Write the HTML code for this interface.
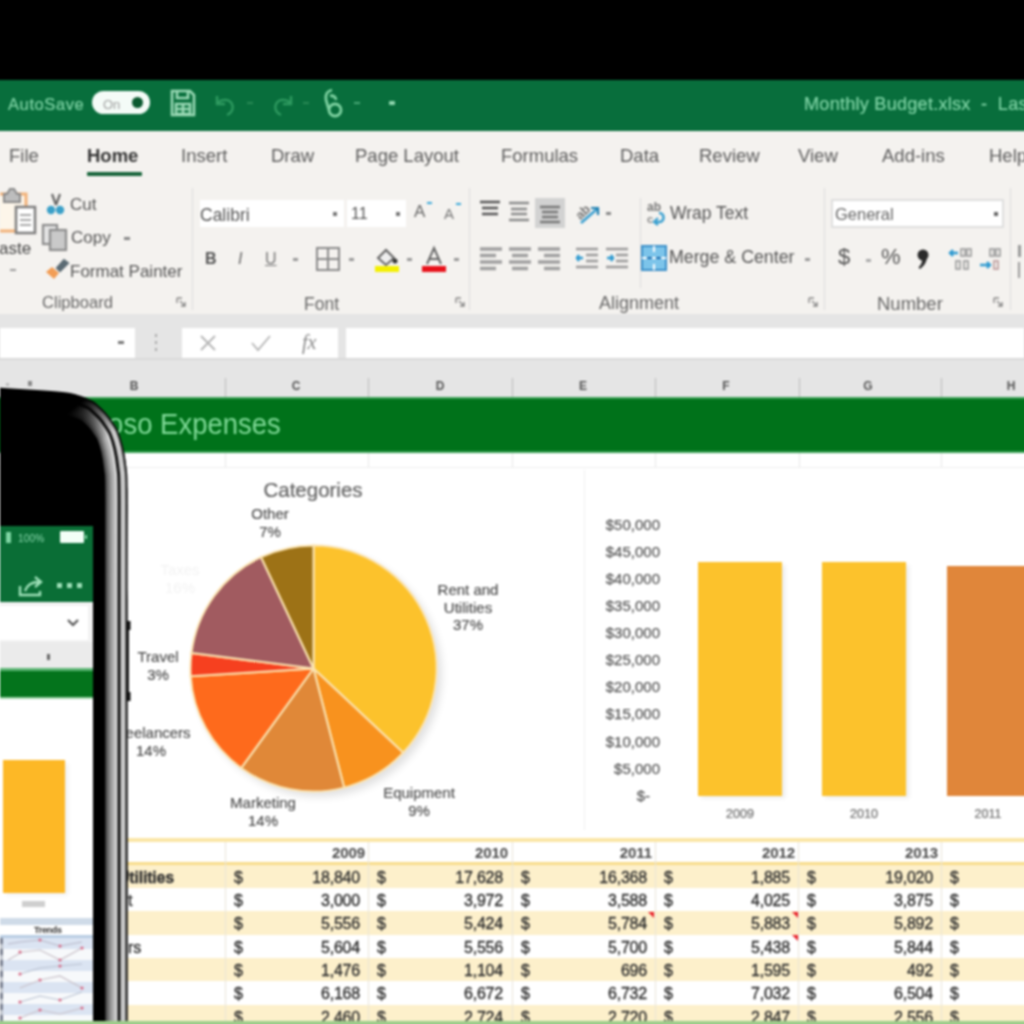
<!DOCTYPE html>
<html><head><meta charset="utf-8">
<style>
*{box-sizing:border-box}
html,body{margin:0;padding:0}
body{width:1024px;height:1024px;overflow:hidden;background:#000;position:relative;font-family:"Liberation Sans",sans-serif}
.a{position:absolute;white-space:nowrap}
#wrap{position:absolute;left:-12px;top:-12px;width:1048px;height:1048px;overflow:hidden;filter:blur(0.85px)}
#in{position:absolute;left:12px;top:12px;width:1024px;height:1024px}
#title{left:-12px;top:80px;width:1048px;height:51px;background:#086e3c}
#ribbon{left:-12px;top:131px;width:1048px;height:184px;background:#f4f2ef}
#fbar{left:-12px;top:314px;width:1048px;height:84px;background:#e5e5e5}
.tab{top:146px;font-size:18.5px;color:#5c5c5c;line-height:20px}
.grp{top:294px;font-size:14px;color:#666;line-height:18px}
.sep{width:1px;background:#dcdcdc;top:188px;height:122px}
.rt{font-size:14.5px;color:#444;line-height:18px}
#sheet{left:-12px;top:397px;width:1048px;height:660px;background:#fff}
#band{left:-12px;top:397px;width:1048px;height:56px;background:#00721a;border-top:2px solid #3aa055}
.colh{top:378px;font-size:12px;color:#555;line-height:16px;font-weight:bold;width:20px;text-align:center}
.vl{width:1px;background:#e8e8e8}
.ylab{font-size:15px;color:#5a5a5a;line-height:16px;text-align:right;width:70px;letter-spacing:0px;-webkit-text-stroke:0.25px #5a5a5a}
.plab{font-size:15px;color:#505050;line-height:17.5px;text-align:center;-webkit-text-stroke:0.2px #505050}
.row{left:0;width:1024px;height:24px}
.cell{font-size:16px;color:#2e2e2e;line-height:24px;letter-spacing:-0.2px;-webkit-text-stroke:0.35px #2e2e2e}
</style></head><body><div id="wrap"><div id="in">
<div class="a" id="title"></div>
<div class="a" id="ribbon"></div>
<div class="a tab" style="left:9px;">File</div>
<div class="a tab" style="left:87px;font-weight:bold;color:#333;">Home</div>
<div class="a tab" style="left:181px;">Insert</div>
<div class="a tab" style="left:271px;">Draw</div>
<div class="a tab" style="left:355px;">Page Layout</div>
<div class="a tab" style="left:501px;">Formulas</div>
<div class="a tab" style="left:620px;">Data</div>
<div class="a tab" style="left:699px;">Review</div>
<div class="a tab" style="left:798px;">View</div>
<div class="a tab" style="left:882px;">Add-ins</div>
<div class="a tab" style="left:989px;">Help</div>
<div class="a" style="left:87px;top:172px;width:55px;height:4px;background:#17643a;border-radius:1px"></div>

<!-- ribbon groups -->
<!-- Clipboard -->
<svg class="a" style="left:0;top:186px" width="40" height="50" viewBox="0 0 40 50">
<rect x="-4" y="8" width="30" height="37" fill="#fdf6ea" stroke="#f2b27a" stroke-width="3"/>
<path d="M4 16V8h3l3-5h4l3 5h3v8z" fill="#bdbdbd" stroke="#8a8a8a" stroke-width="2"/>
<rect x="16" y="21" width="19" height="26" fill="#fff" stroke="#7e7e7e" stroke-width="2.5"/>
<path d="M20 29h11M20 34h11M20 39h11" stroke="#a8a8a8" stroke-width="2"/></svg>
<div class="a rt" style="left:-1px;top:240px;font-size:17px">aste</div>
<div class="a" style="left:10px;top:269px;width:6px;height:2px;background:#999"></div>
<svg class="a" style="left:43px;top:192px" width="26" height="26" viewBox="0 0 26 26">
<path d="M9 2l4 11M17 2l-4 11" stroke="#666" stroke-width="2.2"/>
<circle cx="8" cy="18" r="4.2" fill="#3ba0c8"/><circle cx="17" cy="18" r="4.2" fill="#3ba0c8"/></svg>
<div class="a rt" style="left:70px;top:195.5px;font-size:17px;color:#555">Cut</div>
<svg class="a" style="left:41px;top:223px" width="30" height="30" viewBox="0 0 30 30">
<rect x="2" y="2" width="14" height="19" fill="#e4e4e4" stroke="#8d8d8d" stroke-width="2.2"/>
<rect x="9" y="7" width="16" height="20" fill="#c9c9c9" stroke="#8d8d8d" stroke-width="2.2"/></svg>
<div class="a rt" style="left:71px;top:229px;font-size:17px;color:#555">Copy</div>
<div class="a" style="left:124px;top:237px;width:6px;height:3px;background:#888"></div>
<svg class="a" style="left:43px;top:256px" width="28" height="26" viewBox="0 0 28 26">
<path d="M14 12l7-8 4 3-8 8z" fill="#5b6b74" stroke="#5b6b74" stroke-width="2"/>
<path d="M3 16l6-5 7 6-5 6z" fill="#f29d55"/></svg>
<div class="a rt" style="left:70px;top:262.5px;font-size:17px;color:#555">Format Painter</div>
<div class="a grp" style="left:42px;top:294px;font-size:16.6px">Clipboard</div>
<svg class="a" style="left:176px;top:297px" width="10" height="10" viewBox="0 0 10 10" fill="none" stroke="#888" stroke-width="1.4"><path d="M1 1h5M1 1v5M4 4l5 5M9 5v4H5"/></svg>
<div class="a sep" style="left:192px"></div>
<!-- Font -->
<div class="a" style="left:200px;top:200px;width:144px;height:27px;background:#fff"></div>
<div class="a rt" style="left:200px;top:206px;font-size:17.5px;color:#555">Calibri</div>
<div class="a" style="left:333px;top:212px;width:4px;height:4px;background:#777"></div>
<div class="a" style="left:347px;top:200px;width:59px;height:27px;background:#fff"></div>
<div class="a rt" style="left:351px;top:205px;font-size:16px;color:#555">11</div>
<div class="a" style="left:396px;top:212px;width:4px;height:4px;background:#777"></div>
<div class="a rt" style="left:414px;top:203px;font-size:17px;color:#666">A</div>
<div class="a" style="left:427px;top:202px;width:5px;height:3px;border-top:2px solid #3aa8d8"></div>
<div class="a rt" style="left:444px;top:205px;font-size:15px;color:#777">A</div>
<div class="a" style="left:456px;top:202px;width:5px;height:3px;border-bottom:2px solid #3aa8d8"></div>
<div class="a rt" style="left:205px;top:250px;font-size:16px;font-weight:bold;color:#555">B</div>
<div class="a rt" style="left:238px;top:250px;font-size:16px;font-style:italic;color:#666">I</div>
<div class="a rt" style="left:265px;top:250px;font-size:16px;text-decoration:underline;color:#777">U</div>
<div class="a" style="left:293px;top:258px;width:5px;height:3px;background:#999"></div>
<svg class="a" style="left:315px;top:246px" width="26" height="26" viewBox="0 0 26 26" fill="none" stroke="#8a8a8a" stroke-width="2"><rect x="2" y="2" width="22" height="22"/><path d="M13 2v22M2 13h22"/></svg>
<div class="a" style="left:349px;top:258px;width:5px;height:3px;background:#999"></div>
<svg class="a" style="left:373px;top:244px" width="28" height="30" viewBox="0 0 28 30"><path d="M5 14l8-8 8 8-8 7z" fill="#eee" stroke="#666" stroke-width="2"/><circle cx="22" cy="17" r="2.5" fill="#333"/><rect x="2" y="22" width="24" height="6" fill="#f4f000"/></svg>
<div class="a" style="left:407px;top:258px;width:5px;height:3px;background:#999"></div>
<svg class="a" style="left:420px;top:244px" width="28" height="30" viewBox="0 0 28 30"><path d="M7 20l7-16 7 16M9.5 15h9" fill="none" stroke="#666" stroke-width="2"/><rect x="2" y="22" width="24" height="6" fill="#e8111a"/></svg>
<div class="a" style="left:454px;top:258px;width:5px;height:3px;background:#999"></div>
<div class="a grp" style="left:304px;top:295px;font-size:17.5px">Font</div>
<svg class="a" style="left:455px;top:297px" width="10" height="10" viewBox="0 0 10 10" fill="none" stroke="#888" stroke-width="1.4"><path d="M1 1h5M1 1v5M4 4l5 5M9 5v4H5"/></svg>
<div class="a sep" style="left:469px"></div>
<!-- Alignment -->
<svg class="a" style="left:478px;top:199px" width="24" height="22" viewBox="0 0 24 22" stroke="#555" stroke-width="2.4"><path d="M2 3h20M4 9h16M4 15h16"/></svg>
<svg class="a" style="left:507px;top:199px" width="24" height="24" viewBox="0 0 24 24" stroke="#8a8a8a" stroke-width="2.4"><path d="M2 4h20M4 10h16M4 15h16M2 21h20"/></svg>
<div class="a" style="left:535px;top:198px;width:30px;height:30px;background:#d2d2d2"></div>
<svg class="a" style="left:538px;top:201px" width="24" height="24" viewBox="0 0 24 24" stroke="#777" stroke-width="2.4"><path d="M2 6h20M4 11h16M4 16h16M2 21h20"/></svg>
<svg class="a" style="left:572px;top:198px" width="30" height="28" viewBox="0 0 30 28" fill="none"><g transform="rotate(-45 12 12)"><text x="2" y="17" font-family="Liberation Sans" font-size="13" font-weight="bold" fill="#777">ab</text></g><path d="M9 25L25 11" stroke="#3b9fd0" stroke-width="2.6"/><path d="M19 10h7v7" stroke="#1f7fb0" stroke-width="2.2"/></svg>
<div class="a" style="left:606px;top:212px;width:5px;height:3px;background:#888"></div>
<svg class="a" style="left:645px;top:199px" width="26" height="28" viewBox="0 0 26 28" fill="none"><text x="2" y="12" font-family="Liberation Sans" font-size="12" font-weight="bold" fill="#777">ab</text><text x="2" y="24" font-family="Liberation Sans" font-size="11" font-weight="bold" fill="#888">c</text><path d="M14 14c6 0 6 9 0 9h-4" stroke="#3aa0d0" stroke-width="2.6"/><path d="M13 19l-4 4 4 3" stroke="#3aa0d0" stroke-width="2.2"/></svg>
<div class="a rt" style="left:670px;top:204px;font-size:17.5px;color:#555">Wrap Text</div>
<svg class="a" style="left:478px;top:246px" width="26" height="26" viewBox="0 0 26 26" stroke="#a0a0a0" stroke-width="3.4"><path d="M2 3h22M2 9.5h16M2 16h22M2 22.5h16"/></svg>
<svg class="a" style="left:507px;top:246px" width="26" height="26" viewBox="0 0 26 26" stroke="#a0a0a0" stroke-width="3.4"><path d="M2 3h22M5 9.5h16M2 16h22M5 22.5h16"/></svg>
<svg class="a" style="left:536px;top:246px" width="26" height="26" viewBox="0 0 26 26" stroke="#a0a0a0" stroke-width="3.4"><path d="M2 3h22M8 9.5h16M2 16h22M8 22.5h16"/></svg>
<svg class="a" style="left:574px;top:246px" width="26" height="24" viewBox="0 0 26 24" fill="none"><path d="M2 3h22M12 9h12M12 15h12M2 21h22" stroke="#9a9a9a" stroke-width="2.6"/><path d="M3 12h6M5 9l-2 3 2 3" stroke="#2f9ad0" stroke-width="2.4"/></svg>
<svg class="a" style="left:604px;top:246px" width="26" height="24" viewBox="0 0 26 24" fill="none"><path d="M2 3h22M12 9h12M12 15h12M2 21h22" stroke="#9a9a9a" stroke-width="2.6"/><path d="M3 12h6M7 9l2 3-2 3" stroke="#2f9ad0" stroke-width="2.4"/></svg>
<div class="a sep" style="left:640px;top:198px;height:90px"></div>
<svg class="a" style="left:641px;top:245px" width="26" height="26" viewBox="0 0 26 26"><rect x="1" y="1" width="24" height="24" fill="#7cc4ea" stroke="#3b8fc8" stroke-width="2"/><path d="M1 13h24M13 1v6M13 19v6" stroke="#fff" stroke-width="2"/><path d="M6 13h5M15 13h5" stroke="#1f6fb0" stroke-width="2"/></svg>
<div class="a rt" style="left:669px;top:247.5px;font-size:17.8px;color:#555">Merge &amp; Center</div>
<div class="a" style="left:805px;top:258px;width:5px;height:3px;background:#999"></div>
<div class="a grp" style="left:599px;top:294px;font-size:18px">Alignment</div>
<svg class="a" style="left:808px;top:297px" width="10" height="10" viewBox="0 0 10 10" fill="none" stroke="#888" stroke-width="1.4"><path d="M1 1h5M1 1v5M4 4l5 5M9 5v4H5"/></svg>
<div class="a sep" style="left:824px"></div>
<!-- Number -->
<div class="a" style="left:831px;top:199px;width:173px;height:29px;background:#fff;border:2px solid #dedede"></div>
<div class="a rt" style="left:835px;top:205px;font-size:16.5px;color:#666">General</div>
<div class="a" style="left:994px;top:212px;width:4px;height:4px;background:#666"></div>
<div class="a rt" style="left:838px;top:248px;font-size:22px;color:#555">$</div>
<div class="a" style="left:866px;top:259px;width:5px;height:3px;background:#aaa"></div>
<div class="a rt" style="left:881px;top:248px;font-size:22px;color:#555">%</div>
<svg class="a" style="left:915px;top:248px" width="16" height="24" viewBox="0 0 16 24"><circle cx="8" cy="7" r="5.5" fill="#2a2a2a"/><path d="M12 8c0 6-3 10-7 13l-1.5-1.5c3-3 4-6 3.5-9z" fill="#2a2a2a"/></svg>
<svg class="a" style="left:948px;top:246px" width="26" height="26" viewBox="0 0 26 26" fill="none"><path d="M2 7h8M5 4l-3 3 3 3" stroke="#2f9ad0" stroke-width="2.4"/><rect x="13" y="3" width="4" height="7" stroke="#999" stroke-width="1.6"/><rect x="19" y="3" width="4" height="7" stroke="#999" stroke-width="1.6"/><rect x="8" y="15" width="4" height="8" stroke="#999" stroke-width="1.6"/><rect x="16" y="15" width="4" height="8" stroke="#999" stroke-width="1.6"/></svg>
<svg class="a" style="left:978px;top:246px" width="26" height="26" viewBox="0 0 26 26" fill="none"><path d="M2 19h10M9 16l3 3-3 3" stroke="#2f9ad0" stroke-width="2.4"/><rect x="12" y="3" width="4" height="7" stroke="#999" stroke-width="1.6"/><rect x="18" y="3" width="4" height="7" stroke="#999" stroke-width="1.6"/><rect x="16" y="15" width="4" height="8" stroke="#b99" stroke-width="1.6"/></svg>
<div class="a grp" style="left:877px;top:295px;font-size:18.5px">Number</div>
<svg class="a" style="left:993px;top:297px" width="10" height="10" viewBox="0 0 10 10" fill="none" stroke="#888" stroke-width="1.4"><path d="M1 1h5M1 1v5M4 4l5 5M9 5v4H5"/></svg>
<div class="a sep" style="left:1010px"></div>
<div class="a" style="left:1018px;top:245px;width:3px;height:12px;background:#999"></div>
<div class="a" style="left:1018px;top:262px;width:6px;height:16px;border-left:2px solid #999"></div>
<!-- title bar content -->
<div class="a" style="left:8px;top:94px;font-size:16.5px;letter-spacing:0.6px;color:#80d4a6;line-height:20px;-webkit-text-stroke:0.2px #80d4a6">AutoSave</div>
<div class="a" style="left:92px;top:91px;width:58px;height:23px;border-radius:12px;background:#f4fbf7"></div>
<div class="a" style="left:103px;top:97px;font-size:13px;color:#a0a0a0;line-height:15px">On</div>
<div class="a" style="left:132px;top:97px;width:11px;height:11px;border-radius:6px;background:#0b5a30"></div>
<svg class="a" style="left:168px;top:88px" width="30" height="30" viewBox="0 0 30 30" fill="none" stroke="#9ad9b5" stroke-width="2.6">
<path d="M4 3h18l4 4v20H4z"/><path d="M9 3v7h11V3"/><rect x="8" y="16" width="14" height="10"/><path d="M15 16v10M8 21h14"/></svg>
<svg class="a" style="left:212px;top:92px" width="28" height="26" viewBox="0 0 28 26" fill="none" stroke="#2f9a60" stroke-width="2.4">
<path d="M5 4v8h8"/><path d="M5 12c3-5 12-6 15 0c2 4 0 9-5 11"/></svg>
<div class="a" style="left:247px;top:102px;width:6px;height:2px;background:#2a8a55"></div>
<svg class="a" style="left:268px;top:92px" width="28" height="26" viewBox="0 0 28 26" fill="none" stroke="#2f9a60" stroke-width="2.4">
<path d="M23 4v8h-8"/><path d="M23 12c-3-5-12-6-15 0c-2 4 0 9 5 11"/></svg>
<div class="a" style="left:303px;top:102px;width:6px;height:2px;background:#2a8a55"></div>
<svg class="a" style="left:320px;top:88px" width="28" height="32" viewBox="0 0 28 32" fill="none" stroke="#7fd3a2" stroke-width="2.8"><path d="M12 2c-5 1-7 5-6 10l3 10"/><path d="M10 8c3-1 6 1 6 4"/><circle cx="15" cy="22" r="6"/></svg>
<div class="a" style="left:354px;top:102px;width:6px;height:2px;background:#4aa876"></div>
<div class="a" style="left:389px;top:101px;width:6px;height:4px;background:#8fd6ae;border-radius:1px"></div>
<div class="a" style="left:804px;top:93px;font-size:18.2px;letter-spacing:0.2px;color:#80d4a6;line-height:22px;-webkit-text-stroke:0.2px #80d4a6">Monthly Budget.xlsx&nbsp; - &nbsp;Last</div>

<div class="a" id="fbar"></div>

<!-- formula bar -->
<div class="a" style="left:0;top:328px;width:135px;height:30px;background:#fff"></div>
<div class="a" style="left:118px;top:341px;width:6px;height:3px;background:#777"></div>
<div class="a" style="left:155px;top:334px;width:2px;height:3px;background:#aaa"></div>
<div class="a" style="left:155px;top:341px;width:2px;height:3px;background:#aaa"></div>
<div class="a" style="left:155px;top:348px;width:2px;height:3px;background:#aaa"></div>
<div class="a" style="left:182px;top:328px;width:156px;height:30px;background:#fff"></div>
<svg class="a" style="left:199px;top:335px" width="18" height="16" viewBox="0 0 18 16" stroke="#b5b5b5" stroke-width="1.8"><path d="M2 1l14 14M16 1L2 15"/></svg>
<svg class="a" style="left:250px;top:334px" width="22" height="18" viewBox="0 0 22 18" fill="none" stroke="#b5b5b5" stroke-width="1.8"><path d="M2 9l6 7L20 2"/></svg>
<div class="a" style="left:302px;top:330px;font-family:'Liberation Serif',serif;font-style:italic;font-size:20px;color:#888;line-height:24px">fx</div>
<div class="a" style="left:346px;top:328px;width:678px;height:30px;background:#fff"></div>
<!-- column headers -->
<div class="a" style="left:-12px;top:358px;width:1048px;height:2px;background:#d9d9d9"></div>
<div class="a" style="left:6px;top:383px;width:3px;height:3px;background:#bbb"></div><div class="a" style="left:28px;top:381px;width:4px;height:5px;background:#888"></div>
<div class="a colh" style="left:124px">B</div>
<div class="a colh" style="left:286px">C</div>
<div class="a colh" style="left:430px">D</div>
<div class="a colh" style="left:573px">E</div>
<div class="a colh" style="left:716px">F</div>
<div class="a colh" style="left:858px">G</div>
<div class="a colh" style="left:1001px">H</div>
<div class="a" style="left:225px;top:378px;width:1px;height:19px;background:#bbb"></div>
<div class="a" style="left:368px;top:378px;width:1px;height:19px;background:#bbb"></div>
<div class="a" style="left:512px;top:378px;width:1px;height:19px;background:#bbb"></div>
<div class="a" style="left:655px;top:378px;width:1px;height:19px;background:#bbb"></div>
<div class="a" style="left:799px;top:378px;width:1px;height:19px;background:#bbb"></div>
<div class="a" style="left:941px;top:378px;width:1px;height:19px;background:#bbb"></div>
<div class="a" id="sheet"></div>
<div class="a" id="band"></div>
<!-- sheet content -->
<div class="a" style="left:50px;top:405px;font-size:27.5px;color:#80da98;line-height:40px;transform:scaleY(1.08);transform-origin:0 30px">Contoso Expenses</div>
<div class="a" style="left:-12px;top:451px;width:1048px;height:2px;background:#3aa055"></div>
<div class="a vl" style="left:225px;top:453px;height:15px"></div>
<div class="a vl" style="left:368px;top:453px;height:15px"></div>
<div class="a vl" style="left:512px;top:453px;height:15px"></div>
<div class="a vl" style="left:655px;top:453px;height:15px"></div>
<div class="a vl" style="left:799px;top:453px;height:15px"></div>
<div class="a vl" style="left:941px;top:453px;height:15px"></div>
<div class="a" style="left:-12px;top:467px;width:1048px;height:1px;background:#eee"></div>
<svg class="a" style="left:0;top:0" width="1024" height="1024" viewBox="0 0 1024 1024">
<defs><filter id="sh" x="-20%" y="-20%" width="140%" height="140%"><feGaussianBlur stdDeviation="4"/></filter></defs>
<circle cx="318.5" cy="673.5" r="123" fill="#000" opacity="0.12" filter="url(#sh)"/>
<path d="M313.5 668.5L313.5 545.5A123 123 0 0 1 403.2 752.7Z" fill="#fcc22c" stroke="#fbe3b0" stroke-width="2"/><path d="M313.5 668.5L403.2 752.7A123 123 0 0 1 344.1 787.6Z" fill="#f8921e" stroke="#fbe3b0" stroke-width="2"/><path d="M313.5 668.5L344.1 787.6A123 123 0 0 1 241.2 768.0Z" fill="#e08838" stroke="#fbe3b0" stroke-width="2"/><path d="M313.5 668.5L241.2 768.0A123 123 0 0 1 190.7 676.2Z" fill="#fe6a1c" stroke="#fbe3b0" stroke-width="2"/><path d="M313.5 668.5L190.7 676.2A123 123 0 0 1 191.5 653.1Z" fill="#f6401f" stroke="#fbe3b0" stroke-width="2"/><path d="M313.5 668.5L191.5 653.1A123 123 0 0 1 261.1 557.2Z" fill="#a15b60" stroke="#fbe3b0" stroke-width="2"/><path d="M313.5 668.5L261.1 557.2A123 123 0 0 1 313.5 545.5Z" fill="#9d7216" stroke="#fbe3b0" stroke-width="2"/>
</svg>
<div class="a plab" style="left:213px;top:479px;font-size:20.5px;color:#666;width:200px;line-height:22px">Categories</div>
<div class="a plab" style="left:220px;top:505px;width:100px">Other<br>7%</div>
<div class="a plab" style="left:408px;top:581px;width:120px">Rent and<br>Utilities<br>37%</div>
<div class="a plab" style="left:108px;top:648px;width:100px">Travel<br>3%</div>
<div class="a plab" style="left:91px;top:724px;width:120px">Freelancers<br>14%</div>
<div class="a plab" style="left:213px;top:794px;width:100px">Marketing<br>14%</div>
<div class="a plab" style="left:369px;top:784px;width:100px">Equipment<br>9%</div>
<div class="a plab" style="left:130px;top:561px;width:100px;color:#f3f3f3;-webkit-text-stroke:0 transparent">Taxes<br>16%</div>
<div class="a" style="left:584px;top:470px;width:1px;height:360px;background:#f0f0f0"></div>
<!-- table -->
<div class="a" style="left:-12px;top:838px;width:1048px;height:4px;background:#fbe6a6"></div>
<div class="a" style="left:-12px;top:862px;width:1048px;height:3px;background:#f8dc8c"></div>
<div class="a" style="left:-12px;top:865px;width:1048px;height:23px;background:#fdf0cb"></div>
<div class="a" style="left:-12px;top:911px;width:1048px;height:24px;background:#fdf0cb"></div>
<div class="a" style="left:-12px;top:958px;width:1048px;height:23px;background:#fdf0cb"></div>
<div class="a" style="left:-12px;top:1005px;width:1048px;height:19px;background:#fdf0cb"></div>
<div class="a" style="left:225px;top:842px;width:1px;height:182px;background:#e9e4d8"></div>
<div class="a" style="left:368px;top:842px;width:1px;height:182px;background:#e9e4d8"></div>
<div class="a" style="left:512px;top:842px;width:1px;height:182px;background:#e9e4d8"></div>
<div class="a" style="left:655px;top:842px;width:1px;height:182px;background:#e9e4d8"></div>
<div class="a" style="left:798px;top:842px;width:1px;height:182px;background:#e9e4d8"></div>
<div class="a" style="left:941px;top:842px;width:1px;height:182px;background:#e9e4d8"></div>
<div class="a" style="left:265px;top:843px;width:100px;text-align:right;font-size:15px;font-weight:bold;color:#4a4a4a;line-height:19px;letter-spacing:-0.1px">2009</div>
<div class="a" style="left:408px;top:843px;width:100px;text-align:right;font-size:15px;font-weight:bold;color:#4a4a4a;line-height:19px;letter-spacing:-0.1px">2010</div>
<div class="a" style="left:552px;top:843px;width:100px;text-align:right;font-size:15px;font-weight:bold;color:#4a4a4a;line-height:19px;letter-spacing:-0.1px">2011</div>
<div class="a" style="left:695px;top:843px;width:100px;text-align:right;font-size:15px;font-weight:bold;color:#4a4a4a;line-height:19px;letter-spacing:-0.1px">2012</div>
<div class="a" style="left:838px;top:843px;width:100px;text-align:right;font-size:15px;font-weight:bold;color:#4a4a4a;line-height:19px;letter-spacing:-0.1px">2013</div>
<div class="a cell" style="left:118px;top:866px;font-weight:bold;">Utilities</div>
<div class="a cell" style="left:234px;top:866px">$</div>
<div class="a cell" style="left:260px;top:866px;width:100px;text-align:right">18,840</div>
<div class="a cell" style="left:377px;top:866px">$</div>
<div class="a cell" style="left:403px;top:866px;width:100px;text-align:right">17,628</div>
<div class="a cell" style="left:521px;top:866px">$</div>
<div class="a cell" style="left:547px;top:866px;width:100px;text-align:right">16,368</div>
<div class="a cell" style="left:664px;top:866px">$</div>
<div class="a cell" style="left:690px;top:866px;width:100px;text-align:right">1,885</div>
<div class="a cell" style="left:807px;top:866px">$</div>
<div class="a cell" style="left:833px;top:866px;width:100px;text-align:right">19,020</div>
<div class="a cell" style="left:950px;top:866px">$</div>
<div class="a cell" style="left:128px;top:889px;">t</div>
<div class="a cell" style="left:234px;top:889px">$</div>
<div class="a cell" style="left:260px;top:889px;width:100px;text-align:right">3,000</div>
<div class="a cell" style="left:377px;top:889px">$</div>
<div class="a cell" style="left:403px;top:889px;width:100px;text-align:right">3,972</div>
<div class="a cell" style="left:521px;top:889px">$</div>
<div class="a cell" style="left:547px;top:889px;width:100px;text-align:right">3,588</div>
<div class="a cell" style="left:664px;top:889px">$</div>
<div class="a cell" style="left:690px;top:889px;width:100px;text-align:right">4,025</div>
<div class="a cell" style="left:807px;top:889px">$</div>
<div class="a cell" style="left:833px;top:889px;width:100px;text-align:right">3,875</div>
<div class="a cell" style="left:950px;top:889px">$</div>
<div class="a cell" style="left:234px;top:912px">$</div>
<div class="a cell" style="left:260px;top:912px;width:100px;text-align:right">5,556</div>
<div class="a cell" style="left:377px;top:912px">$</div>
<div class="a cell" style="left:403px;top:912px;width:100px;text-align:right">5,424</div>
<div class="a cell" style="left:521px;top:912px">$</div>
<div class="a cell" style="left:547px;top:912px;width:100px;text-align:right">5,784</div>
<div class="a cell" style="left:664px;top:912px">$</div>
<div class="a cell" style="left:690px;top:912px;width:100px;text-align:right">5,883</div>
<div class="a cell" style="left:807px;top:912px">$</div>
<div class="a cell" style="left:833px;top:912px;width:100px;text-align:right">5,892</div>
<div class="a cell" style="left:950px;top:912px">$</div>
<div class="a cell" style="left:128px;top:936px;">rs</div>
<div class="a cell" style="left:234px;top:936px">$</div>
<div class="a cell" style="left:260px;top:936px;width:100px;text-align:right">5,604</div>
<div class="a cell" style="left:377px;top:936px">$</div>
<div class="a cell" style="left:403px;top:936px;width:100px;text-align:right">5,556</div>
<div class="a cell" style="left:521px;top:936px">$</div>
<div class="a cell" style="left:547px;top:936px;width:100px;text-align:right">5,700</div>
<div class="a cell" style="left:664px;top:936px">$</div>
<div class="a cell" style="left:690px;top:936px;width:100px;text-align:right">5,438</div>
<div class="a cell" style="left:807px;top:936px">$</div>
<div class="a cell" style="left:833px;top:936px;width:100px;text-align:right">5,844</div>
<div class="a cell" style="left:950px;top:936px">$</div>
<div class="a cell" style="left:234px;top:959px">$</div>
<div class="a cell" style="left:260px;top:959px;width:100px;text-align:right">1,476</div>
<div class="a cell" style="left:377px;top:959px">$</div>
<div class="a cell" style="left:403px;top:959px;width:100px;text-align:right">1,104</div>
<div class="a cell" style="left:521px;top:959px">$</div>
<div class="a cell" style="left:547px;top:959px;width:100px;text-align:right">696</div>
<div class="a cell" style="left:664px;top:959px">$</div>
<div class="a cell" style="left:690px;top:959px;width:100px;text-align:right">1,595</div>
<div class="a cell" style="left:807px;top:959px">$</div>
<div class="a cell" style="left:833px;top:959px;width:100px;text-align:right">492</div>
<div class="a cell" style="left:950px;top:959px">$</div>
<div class="a cell" style="left:234px;top:982px">$</div>
<div class="a cell" style="left:260px;top:982px;width:100px;text-align:right">6,168</div>
<div class="a cell" style="left:377px;top:982px">$</div>
<div class="a cell" style="left:403px;top:982px;width:100px;text-align:right">6,672</div>
<div class="a cell" style="left:521px;top:982px">$</div>
<div class="a cell" style="left:547px;top:982px;width:100px;text-align:right">6,732</div>
<div class="a cell" style="left:664px;top:982px">$</div>
<div class="a cell" style="left:690px;top:982px;width:100px;text-align:right">7,032</div>
<div class="a cell" style="left:807px;top:982px">$</div>
<div class="a cell" style="left:833px;top:982px;width:100px;text-align:right">6,504</div>
<div class="a cell" style="left:950px;top:982px">$</div>
<div class="a cell" style="left:234px;top:1006px">$</div>
<div class="a cell" style="left:260px;top:1006px;width:100px;text-align:right">2,460</div>
<div class="a cell" style="left:377px;top:1006px">$</div>
<div class="a cell" style="left:403px;top:1006px;width:100px;text-align:right">2,724</div>
<div class="a cell" style="left:521px;top:1006px">$</div>
<div class="a cell" style="left:547px;top:1006px;width:100px;text-align:right">2,720</div>
<div class="a cell" style="left:664px;top:1006px">$</div>
<div class="a cell" style="left:690px;top:1006px;width:100px;text-align:right">2,847</div>
<div class="a cell" style="left:807px;top:1006px">$</div>
<div class="a cell" style="left:833px;top:1006px;width:100px;text-align:right">2,556</div>
<div class="a cell" style="left:950px;top:1006px">$</div>
<svg class="a" style="left:648px;top:912px" width="6" height="6"><path d="M0 0h6v6z" fill="#e8202a"/></svg>
<svg class="a" style="left:792px;top:912px" width="6" height="6"><path d="M0 0h6v6z" fill="#e8202a"/></svg>
<svg class="a" style="left:792px;top:935px" width="6" height="6"><path d="M0 0h6v6z" fill="#e8202a"/></svg>

<div class="a ylab" style="left:590px;top:516.7px">$50,000</div>
<div class="a ylab" style="left:590px;top:543.8px">$45,000</div>
<div class="a ylab" style="left:590px;top:570.9px">$40,000</div>
<div class="a ylab" style="left:590px;top:598.0px">$35,000</div>
<div class="a ylab" style="left:590px;top:625.1px">$30,000</div>
<div class="a ylab" style="left:590px;top:652.2px">$25,000</div>
<div class="a ylab" style="left:590px;top:679.3px">$20,000</div>
<div class="a ylab" style="left:590px;top:706.4px">$15,000</div>
<div class="a ylab" style="left:590px;top:733.5px">$10,000</div>
<div class="a ylab" style="left:590px;top:760.6px">$5,000</div>
<div class="a ylab" style="left:590px;top:787.7px;padding-right:10px">$-</div>

<div class="a" style="left:701px;top:565px;width:84px;height:233px;background:#000;opacity:.08;filter:blur(2px)"></div>
<div class="a" style="left:825px;top:565px;width:84px;height:233px;background:#000;opacity:.08;filter:blur(2px)"></div>
<div class="a" style="left:698px;top:562px;width:84px;height:234px;background:#fcc22c"></div>
<div class="a" style="left:822px;top:562px;width:84px;height:234px;background:#fcc22c"></div>
<div class="a" style="left:947px;top:566px;width:84px;height:230px;background:#e0863a"></div>
<div class="a plab" style="left:700px;top:806px;width:80px;font-size:12.5px;color:#777">2009</div>
<div class="a plab" style="left:824px;top:806px;width:80px;font-size:12.5px;color:#777">2010</div>
<div class="a plab" style="left:948px;top:806px;width:80px;font-size:12.5px;color:#777">2011</div>


<!-- phone -->
<svg class="a" style="left:0;top:0" width="1024" height="1024" viewBox="0 0 1024 1024">
<defs>
<clipPath id="pb"><path d="M-40 385C-35.0 385.3 -26.7 385.9 -10.0 387.0C6.7 388.1 45.1 390.3 60.0 391.7C74.9 393.1 74.2 394.1 79.5 395.6C84.8 397.1 88.8 398.8 92.0 400.5C95.2 402.2 96.7 403.9 99.0 406.0C101.3 408.1 103.8 410.5 106.0 413.0C108.2 415.5 110.0 418.0 112.0 421.0C114.0 424.0 116.2 426.7 118.0 431.0C119.8 435.3 121.6 441.0 123.0 447.0C124.4 453.0 125.5 459.8 126.3 467.0C127.0 474.2 127.3 467.8 127.5 490.0C127.7 512.2 127.5 498.3 127.5 600.0C127.5 701.7 127.5 1016.7 127.5 1100.0L-40 1100Z"/></clipPath>
<linearGradient id="mg" gradientUnits="userSpaceOnUse" x1="86" y1="398" x2="114" y2="432"><stop offset="0" stop-color="#000"/><stop offset="1" stop-color="#fff"/></linearGradient>
<mask id="mk" maskUnits="userSpaceOnUse" x="0" y="0" width="1024" height="1024"><rect x="0" y="0" width="1024" height="1024" fill="url(#mg)"/></mask>
</defs>
<path d="M-40 385C-35.0 385.3 -26.7 385.9 -10.0 387.0C6.7 388.1 45.1 390.3 60.0 391.7C74.9 393.1 74.2 394.1 79.5 395.6C84.8 397.1 88.8 398.8 92.0 400.5C95.2 402.2 96.7 403.9 99.0 406.0C101.3 408.1 103.8 410.5 106.0 413.0C108.2 415.5 110.0 418.0 112.0 421.0C114.0 424.0 116.2 426.7 118.0 431.0C119.8 435.3 121.6 441.0 123.0 447.0C124.4 453.0 125.5 459.8 126.3 467.0C127.0 474.2 127.3 467.8 127.5 490.0C127.7 512.2 127.5 498.3 127.5 600.0C127.5 701.7 127.5 1016.7 127.5 1100.0L-40 1100Z" fill="#000"/>
<g clip-path="url(#pb)"><g mask="url(#mk)"><path d="M-40 385C-35.0 385.3 -26.7 385.9 -10.0 387.0C6.7 388.1 45.1 390.3 60.0 391.7C74.9 393.1 74.2 394.1 79.5 395.6C84.8 397.1 88.8 398.8 92.0 400.5C95.2 402.2 96.7 403.9 99.0 406.0C101.3 408.1 103.8 410.5 106.0 413.0C108.2 415.5 110.0 418.0 112.0 421.0C114.0 424.0 116.2 426.7 118.0 431.0C119.8 435.3 121.6 441.0 123.0 447.0C124.4 453.0 125.5 459.8 126.3 467.0C127.0 474.2 127.3 467.8 127.5 490.0C127.7 512.2 127.5 498.3 127.5 600.0C127.5 701.7 127.5 1016.7 127.5 1100.0" fill="none" stroke="#5a5a5a" stroke-width="44"/><path d="M-40 385C-35.0 385.3 -26.7 385.9 -10.0 387.0C6.7 388.1 45.1 390.3 60.0 391.7C74.9 393.1 74.2 394.1 79.5 395.6C84.8 397.1 88.8 398.8 92.0 400.5C95.2 402.2 96.7 403.9 99.0 406.0C101.3 408.1 103.8 410.5 106.0 413.0C108.2 415.5 110.0 418.0 112.0 421.0C114.0 424.0 116.2 426.7 118.0 431.0C119.8 435.3 121.6 441.0 123.0 447.0C124.4 453.0 125.5 459.8 126.3 467.0C127.0 474.2 127.3 467.8 127.5 490.0C127.7 512.2 127.5 498.3 127.5 600.0C127.5 701.7 127.5 1016.7 127.5 1100.0" fill="none" stroke="#8a8a8a" stroke-width="38"/><path d="M-40 385C-35.0 385.3 -26.7 385.9 -10.0 387.0C6.7 388.1 45.1 390.3 60.0 391.7C74.9 393.1 74.2 394.1 79.5 395.6C84.8 397.1 88.8 398.8 92.0 400.5C95.2 402.2 96.7 403.9 99.0 406.0C101.3 408.1 103.8 410.5 106.0 413.0C108.2 415.5 110.0 418.0 112.0 421.0C114.0 424.0 116.2 426.7 118.0 431.0C119.8 435.3 121.6 441.0 123.0 447.0C124.4 453.0 125.5 459.8 126.3 467.0C127.0 474.2 127.3 467.8 127.5 490.0C127.7 512.2 127.5 498.3 127.5 600.0C127.5 701.7 127.5 1016.7 127.5 1100.0" fill="none" stroke="#b0b0b0" stroke-width="32"/><path d="M-40 385C-35.0 385.3 -26.7 385.9 -10.0 387.0C6.7 388.1 45.1 390.3 60.0 391.7C74.9 393.1 74.2 394.1 79.5 395.6C84.8 397.1 88.8 398.8 92.0 400.5C95.2 402.2 96.7 403.9 99.0 406.0C101.3 408.1 103.8 410.5 106.0 413.0C108.2 415.5 110.0 418.0 112.0 421.0C114.0 424.0 116.2 426.7 118.0 431.0C119.8 435.3 121.6 441.0 123.0 447.0C124.4 453.0 125.5 459.8 126.3 467.0C127.0 474.2 127.3 467.8 127.5 490.0C127.7 512.2 127.5 498.3 127.5 600.0C127.5 701.7 127.5 1016.7 127.5 1100.0" fill="none" stroke="#cfcfcf" stroke-width="26"/><path d="M-40 385C-35.0 385.3 -26.7 385.9 -10.0 387.0C6.7 388.1 45.1 390.3 60.0 391.7C74.9 393.1 74.2 394.1 79.5 395.6C84.8 397.1 88.8 398.8 92.0 400.5C95.2 402.2 96.7 403.9 99.0 406.0C101.3 408.1 103.8 410.5 106.0 413.0C108.2 415.5 110.0 418.0 112.0 421.0C114.0 424.0 116.2 426.7 118.0 431.0C119.8 435.3 121.6 441.0 123.0 447.0C124.4 453.0 125.5 459.8 126.3 467.0C127.0 474.2 127.3 467.8 127.5 490.0C127.7 512.2 127.5 498.3 127.5 600.0C127.5 701.7 127.5 1016.7 127.5 1100.0" fill="none" stroke="#e0e0e0" stroke-width="22"/><path d="M-40 385C-35.0 385.3 -26.7 385.9 -10.0 387.0C6.7 388.1 45.1 390.3 60.0 391.7C74.9 393.1 74.2 394.1 79.5 395.6C84.8 397.1 88.8 398.8 92.0 400.5C95.2 402.2 96.7 403.9 99.0 406.0C101.3 408.1 103.8 410.5 106.0 413.0C108.2 415.5 110.0 418.0 112.0 421.0C114.0 424.0 116.2 426.7 118.0 431.0C119.8 435.3 121.6 441.0 123.0 447.0C124.4 453.0 125.5 459.8 126.3 467.0C127.0 474.2 127.3 467.8 127.5 490.0C127.7 512.2 127.5 498.3 127.5 600.0C127.5 701.7 127.5 1016.7 127.5 1100.0" fill="none" stroke="#121212" stroke-width="20"/><path d="M-40 385C-35.0 385.3 -26.7 385.9 -10.0 387.0C6.7 388.1 45.1 390.3 60.0 391.7C74.9 393.1 74.2 394.1 79.5 395.6C84.8 397.1 88.8 398.8 92.0 400.5C95.2 402.2 96.7 403.9 99.0 406.0C101.3 408.1 103.8 410.5 106.0 413.0C108.2 415.5 110.0 418.0 112.0 421.0C114.0 424.0 116.2 426.7 118.0 431.0C119.8 435.3 121.6 441.0 123.0 447.0C124.4 453.0 125.5 459.8 126.3 467.0C127.0 474.2 127.3 467.8 127.5 490.0C127.7 512.2 127.5 498.3 127.5 600.0C127.5 701.7 127.5 1016.7 127.5 1100.0" fill="none" stroke="#c9c9c9" stroke-width="14"/><path d="M-40 385C-35.0 385.3 -26.7 385.9 -10.0 387.0C6.7 388.1 45.1 390.3 60.0 391.7C74.9 393.1 74.2 394.1 79.5 395.6C84.8 397.1 88.8 398.8 92.0 400.5C95.2 402.2 96.7 403.9 99.0 406.0C101.3 408.1 103.8 410.5 106.0 413.0C108.2 415.5 110.0 418.0 112.0 421.0C114.0 424.0 116.2 426.7 118.0 431.0C119.8 435.3 121.6 441.0 123.0 447.0C124.4 453.0 125.5 459.8 126.3 467.0C127.0 474.2 127.3 467.8 127.5 490.0C127.7 512.2 127.5 498.3 127.5 600.0C127.5 701.7 127.5 1016.7 127.5 1100.0" fill="none" stroke="#1a1a1a" stroke-width="4"/></g></g>
<rect x="126" y="621" width="3" height="80" fill="#1a1a1a"/><rect x="126" y="621" width="4.5" height="9" fill="#111"/><rect x="126" y="692" width="4.5" height="9" fill="#111"/>
</svg>
<!-- screen -->
<div class="a" style="left:-12px;top:526px;width:105px;height:520px;background:#fff;overflow:hidden"><div class="a" style="left:12px;top:0;width:93px;height:520px">
  <div class="a" style="left:0;top:0;width:93px;height:76px;background:#0a6e36"></div>
  <div class="a" style="left:6px;top:6px;width:5px;height:11px;background:#7fd6a3"></div>
  <div class="a" style="left:18px;top:7px;font-size:10px;color:#8ad8ad;line-height:12px;letter-spacing:0.2px">100%</div>
  <div class="a" style="left:60px;top:5px;width:24px;height:12px;background:#f2fff7;border-radius:1px"></div>
  <div class="a" style="left:85px;top:9px;width:2px;height:4px;background:#7fd6a3"></div>
  <svg class="a" style="left:17px;top:46px" width="30" height="26" viewBox="0 0 30 26" fill="none" stroke="#9ee0b8" stroke-width="2.4"><path d="M3 14v9h20v-4"/><path d="M8 19c2-6 7-9 14-9M18 5l6 5-6 5"/></svg>
  <div class="a" style="left:57px;top:57px;width:5px;height:5px;background:#9ee0b8"></div>
  <div class="a" style="left:67px;top:57px;width:5px;height:5px;background:#9ee0b8"></div>
  <div class="a" style="left:77px;top:57px;width:5px;height:5px;background:#9ee0b8"></div>
  <div class="a" style="left:0;top:76px;width:93px;height:40px;background:#f2f2f2"></div>
  <div class="a" style="left:0;top:80px;width:88px;height:34px;background:#fff"></div>
  <svg class="a" style="left:66px;top:92px" width="14" height="9" viewBox="0 0 14 9" fill="none" stroke="#555" stroke-width="2.2"><path d="M2 2l5 5 5-5"/></svg>
  <div class="a" style="left:0;top:116px;width:93px;height:26px;background:#ebebeb"></div>
  <div class="a" style="left:47px;top:128px;width:3px;height:6px;background:#666"></div>
  <div class="a" style="left:0;top:142px;width:93px;height:3px;background:#5cb574"></div>
  <div class="a" style="left:0;top:145px;width:93px;height:26px;background:#04741c"></div>
  <div class="a" style="left:0;top:171px;width:93px;height:2px;background:#9fd5a8"></div>
  <div class="a" style="left:6px;top:237px;width:62px;height:132px;background:#000;opacity:.06;filter:blur(2px)"></div>
  <div class="a" style="left:3px;top:234px;width:62px;height:133px;background:#fdb826"></div>
  <div class="a" style="left:22px;top:375px;width:23px;height:6px;background:#cfcfcf"></div>
  <div class="a" style="left:0;top:392px;width:93px;height:7px;background:#cfdbe8"></div>
  <div class="a" style="left:3px;top:399px;width:90px;height:10px;background:#fff"></div>
  <div class="a" style="left:34px;top:399px;font-size:9px;font-weight:bold;color:#333;line-height:10px;letter-spacing:-0.3px">Trends</div>
  <div class="a" style="left:0;top:409px;width:93px;height:3px;background:#b9cde3"></div>
  <div class="a" style="left:0;top:412px;width:93px;height:86px;background:repeating-linear-gradient(180deg,#dbe4f2 0,#dbe4f2 11px,#f7f9fb 11px,#f7f9fb 22px)"></div>
  <svg class="a" style="left:0;top:412px" width="93" height="86" viewBox="0 0 93 86" fill="none" stroke-width="1.2">
    <path d="M8 6L20 4L40 2L60 8L82 4" stroke="#b8b8c8"/><path d="M8 22L22 14L40 12L60 22L82 10" stroke="#c8c0c8"/>
    <path d="M20 36L40 30L60 28L82 26" stroke="#b8c0d0"/><path d="M20 50L40 42L60 38L82 50" stroke="#c8c0c8"/>
    <path d="M20 64L40 58L60 62L82 54" stroke="#b8c0d0"/><path d="M20 80L40 72L60 76L82 70" stroke="#c8c0c8"/>
    <g fill="#d86a86" stroke="none"><circle cx="40" cy="2" r="1.6"/><circle cx="60" cy="8" r="1.6"/><circle cx="20" cy="14" r="1.6"/><circle cx="60" cy="22" r="1.6"/><circle cx="82" cy="10" r="1.6"/><circle cx="20" cy="36" r="1.6"/><circle cx="60" cy="28" r="1.6"/><circle cx="40" cy="42" r="1.6"/><circle cx="82" cy="50" r="1.6"/><circle cx="20" cy="64" r="1.6"/><circle cx="60" cy="62" r="1.6"/><circle cx="40" cy="72" r="1.6"/><circle cx="82" cy="70" r="1.6"/><circle cx="20" cy="80" r="1.6"/></g>
  </svg>
  <div class="a" style="left:0;top:412px;width:3px;height:86px;background:repeating-linear-gradient(180deg,#7a8090 0,#7a8090 6px,#c0c4cc 6px,#c0c4cc 11px)"></div>
</div>
</div>
<div class="a" style="left:-12px;top:1021px;width:1048px;height:20px;background:#9dcd8b"></div>
</div></div></body></html>
